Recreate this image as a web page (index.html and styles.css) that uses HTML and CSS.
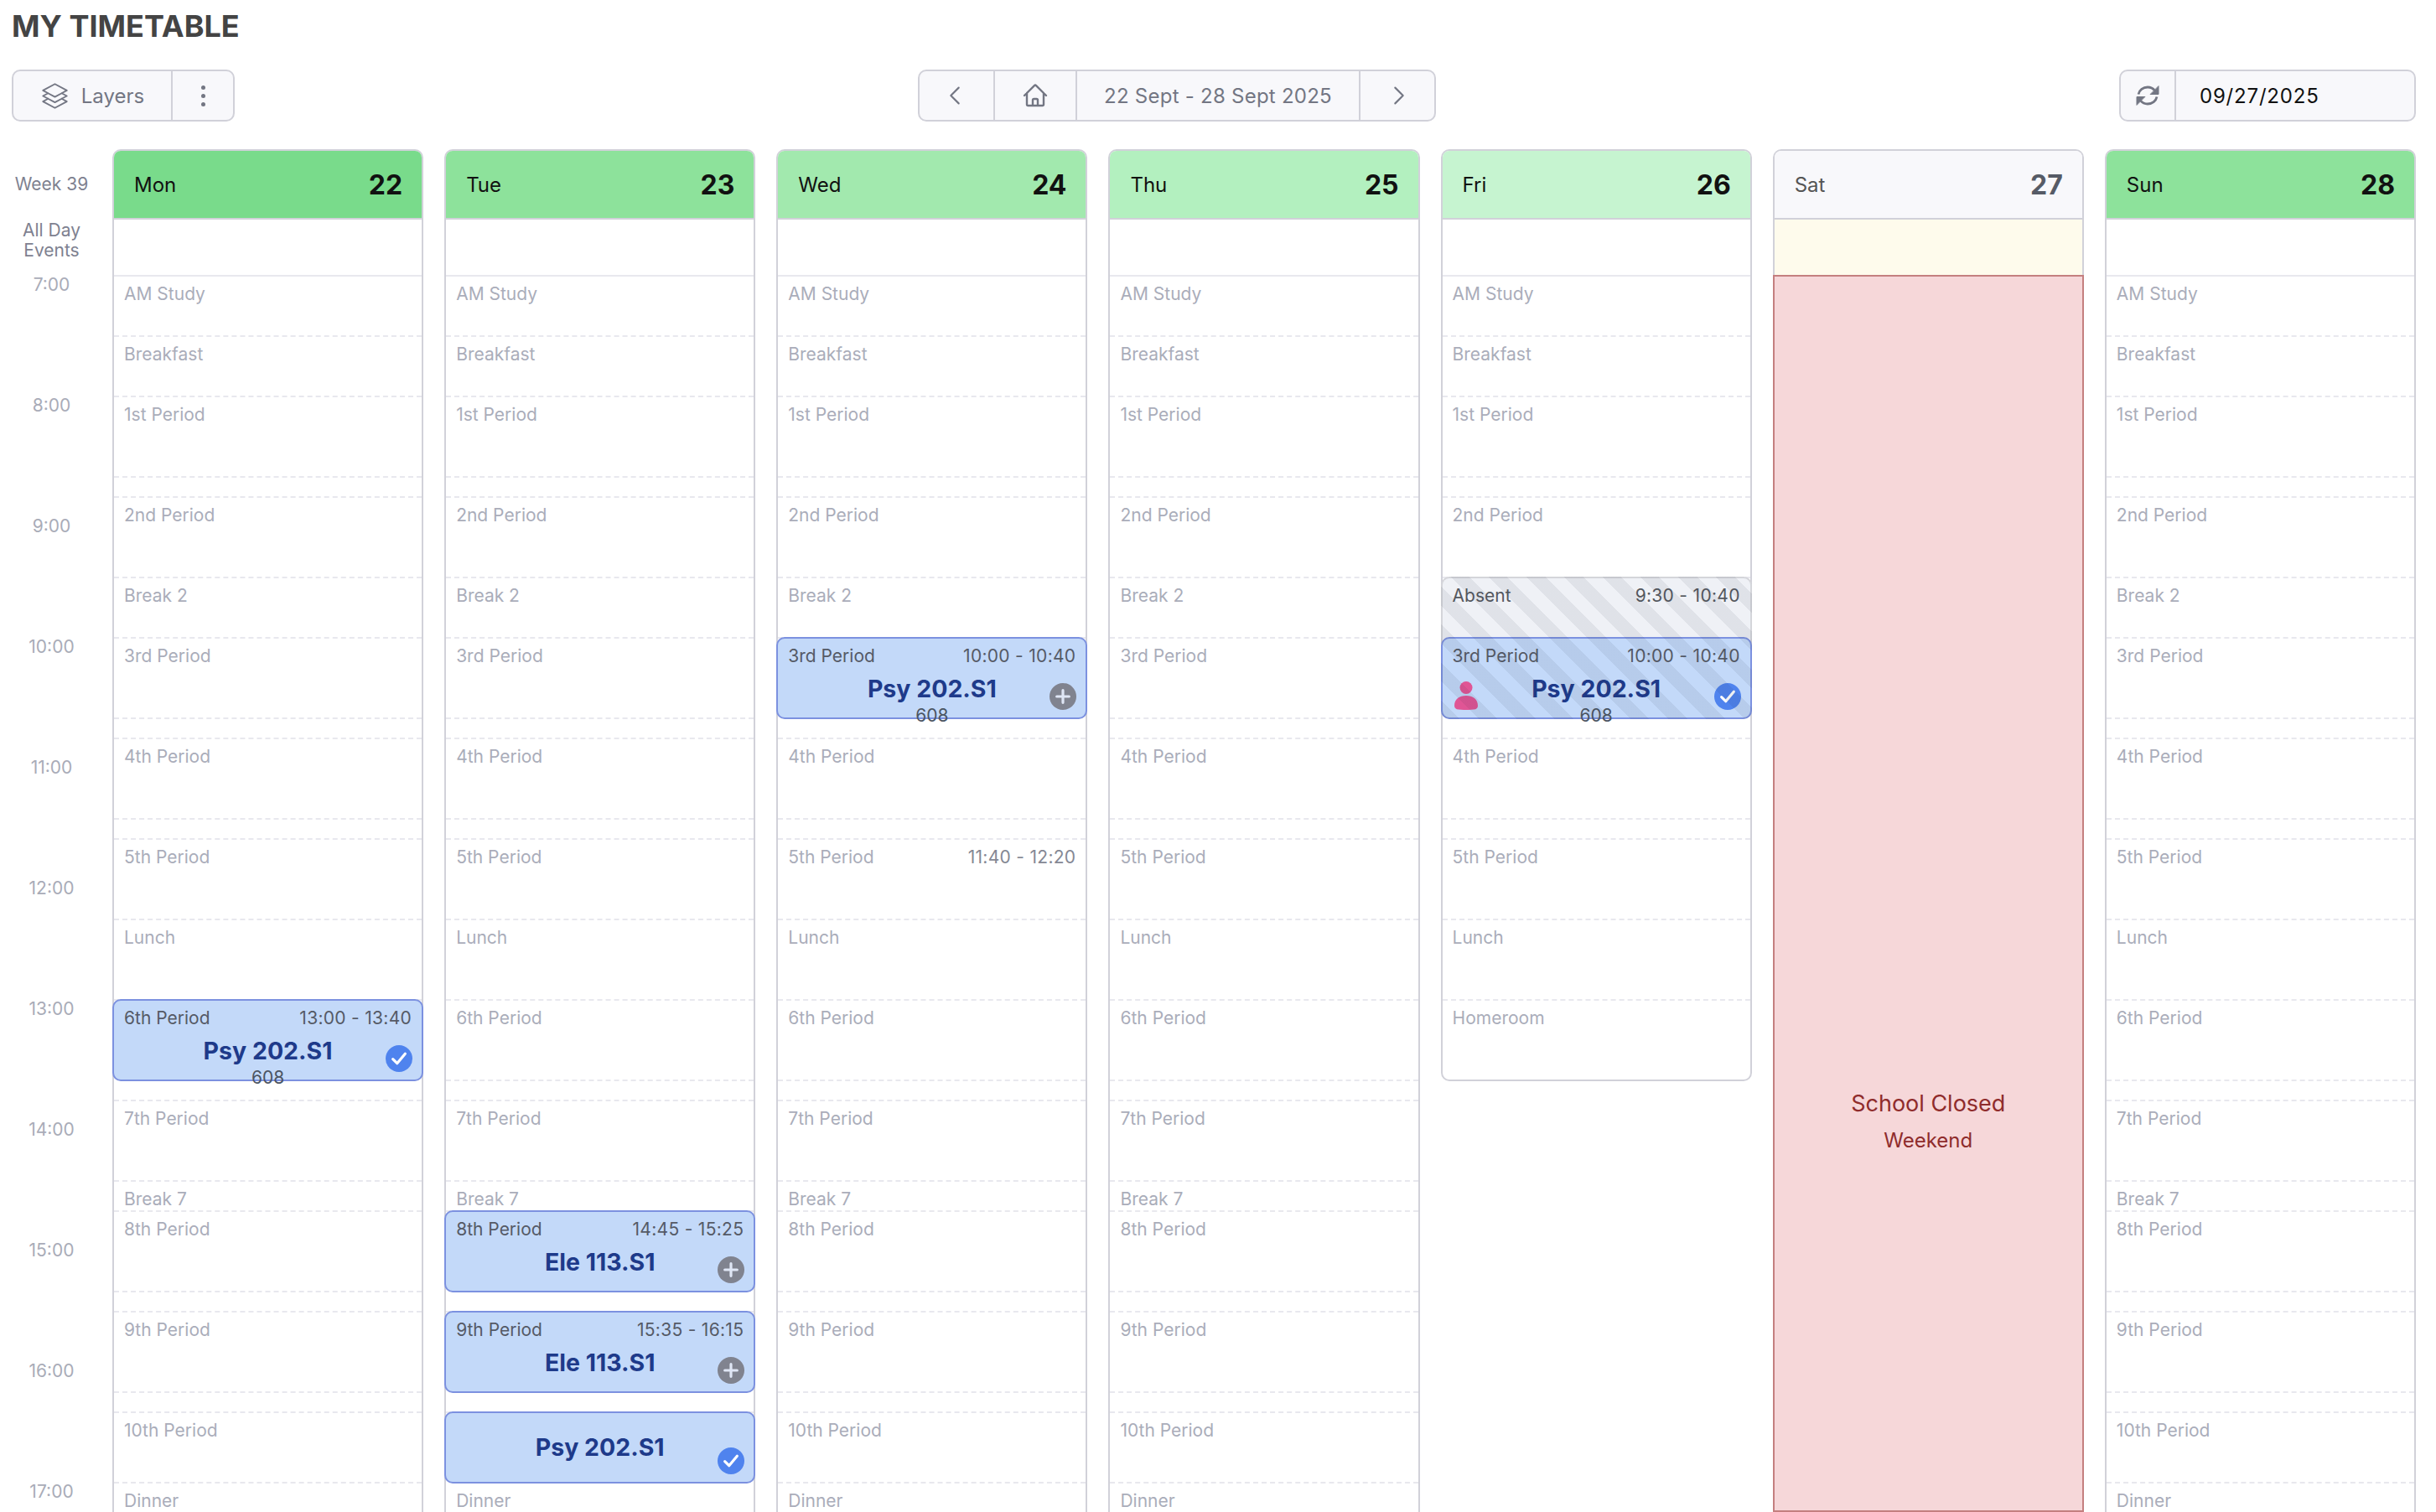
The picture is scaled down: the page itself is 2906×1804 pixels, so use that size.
FILE: index.html
```html
<!DOCTYPE html>
<html lang="en">
<head>
<meta charset="utf-8">
<title>My Timetable</title>
<link rel="stylesheet" href="styles.css">
</head>
<body>
<div class="page">
  <h1 class="title">MY TIMETABLE</h1>
  <div class="toolbar">
    <div class="group">
      <div class="seg seg-layers">
        <svg class="icon-layers" viewBox="0 0 24 24"><path d="M6.429 9.75 2.25 12l4.179 2.25m0-4.5 5.571 3 5.571-3m-11.142 0L2.25 7.5 12 2.25l9.75 5.25-4.179 2.25m0 0L21.75 12l-4.179 2.25m0 0 4.179 2.25L12 21.75 2.25 16.5l4.179-2.25m11.142 0-5.571 3-5.571-3"/></svg>
        <span>Layers</span>
      </div>
      <div class="seg seg-more"><i></i><i></i><i></i></div>
    </div>
    <div class="group">
      <div class="seg seg-prev"><svg class="icon-chev" viewBox="0 0 24 24"><path d="M15.75 19.5 8.25 12l7.5-7.5"/></svg></div>
      <div class="seg seg-home"><svg class="icon-home" viewBox="0 0 24 24"><path d="m2.25 12 8.954-8.955c.44-.439 1.152-.439 1.591 0L21.75 12M4.5 9.75v10.125c0 .621.504 1.125 1.125 1.125H9.75v-4.875c0-.621.504-1.125 1.125-1.125h2.25c.621 0 1.125.504 1.125 1.125V21h4.125c.621 0 1.125-.504 1.125-1.125V9.75M8.25 21h8.25"/></svg></div>
      <div class="seg seg-range">22 Sept - 28 Sept 2025</div>
      <div class="seg seg-next"><svg class="icon-chev" viewBox="0 0 24 24"><path d="m8.25 4.5 7.5 7.5-7.5 7.5"/></svg></div>
    </div>
    <div class="group">
      <div class="seg seg-refresh"><svg class="icon-refresh" viewBox="0 0 28 26"><path class="arc" d="M3 11.500C4 6.500 8.500 3 14 3c3.500 0 6.500 1.500 8.500 4M25 14.500C24 19.500 19.500 23 14 23c-3.500 0-6.500-1.500-8.500-4"/><path class="head" d="M27 2v9.500h-9.500zM1 24v-9.500h9.500z"/></svg></div>
      <div class="seg seg-date">09/27/2025</div>
    </div>
  </div>

  <div class="grid">
    <div class="times">
      <div class="week">Week 39</div>
      <div class="allday-label">All Day<br>Events</div>
      <div class="hour">7:00</div><div class="hour">8:00</div><div class="hour">9:00</div><div class="hour">10:00</div><div class="hour">11:00</div><div class="hour">12:00</div><div class="hour">13:00</div><div class="hour">14:00</div><div class="hour">15:00</div><div class="hour">16:00</div><div class="hour">17:00</div>
    </div>

    <!-- Mon -->
    <div class="day">
      <div class="day-head c-mon"><span>Mon</span><b>22</b></div>
      <div class="allday"></div>
      <div class="slot s30">AM Study</div>
      <div class="slot s30">Breakfast</div>
      <div class="slot s40">1st Period</div>
      <div class="slot s10"></div>
      <div class="slot s40">2nd Period</div>
      <div class="slot s30">Break 2</div>
      <div class="slot s40">3rd Period</div>
      <div class="slot s10"></div>
      <div class="slot s40">4th Period</div>
      <div class="slot s10"></div>
      <div class="slot s40">5th Period</div>
      <div class="slot s40">Lunch</div>
      <div class="event s40">
        <div class="event-row"><span>6th Period</span><span class="range">13:00 - 13:40</span></div>
        <div class="event-title">Psy 202.S1</div>
        <div class="event-room">608</div>
        <span class="badge badge-check"><svg viewBox="0 0 24 24"><path d="m6.500 12.500 3.800 3.800 7.200-8.600"/></svg></span>
      </div>
      <div class="slot s10"></div>
      <div class="slot s40">7th Period</div>
      <div class="slot s15">Break 7</div>
      <div class="slot s40">8th Period</div>
      <div class="slot s10"></div>
      <div class="slot s40">9th Period</div>
      <div class="slot s10"></div>
      <div class="slot s35">10th Period</div>
      <div class="slot s30">Dinner</div>
    </div>

    <!-- Tue -->
    <div class="day">
      <div class="day-head c-tue"><span>Tue</span><b>23</b></div>
      <div class="allday"></div>
      <div class="slot s30">AM Study</div>
      <div class="slot s30">Breakfast</div>
      <div class="slot s40">1st Period</div>
      <div class="slot s10"></div>
      <div class="slot s40">2nd Period</div>
      <div class="slot s30">Break 2</div>
      <div class="slot s40">3rd Period</div>
      <div class="slot s10"></div>
      <div class="slot s40">4th Period</div>
      <div class="slot s10"></div>
      <div class="slot s40">5th Period</div>
      <div class="slot s40">Lunch</div>
      <div class="slot s40">6th Period</div>
      <div class="slot s10"></div>
      <div class="slot s40">7th Period</div>
      <div class="slot s15">Break 7</div>
      <div class="event s40">
        <div class="event-row"><span>8th Period</span><span class="range">14:45 - 15:25</span></div>
        <div class="event-title">Ele 113.S1</div>
        <span class="badge badge-plus"><svg viewBox="0 0 24 24"><path d="M12 6.500v11M6.500 12h11"/></svg></span>
      </div>
      <div class="slot s10"></div>
      <div class="event s40">
        <div class="event-row"><span>9th Period</span><span class="range">15:35 - 16:15</span></div>
        <div class="event-title">Ele 113.S1</div>
        <span class="badge badge-plus"><svg viewBox="0 0 24 24"><path d="M12 6.500v11M6.500 12h11"/></svg></span>
      </div>
      <div class="slot s10"></div>
      <div class="event event-center s35">
        <div class="event-title">Psy 202.S1</div>
        <span class="badge badge-check"><svg viewBox="0 0 24 24"><path d="m6.500 12.500 3.800 3.800 7.200-8.600"/></svg></span>
      </div>
      <div class="slot s30">Dinner</div>
    </div>

    <!-- Wed -->
    <div class="day">
      <div class="day-head c-wed"><span>Wed</span><b>24</b></div>
      <div class="allday"></div>
      <div class="slot s30">AM Study</div>
      <div class="slot s30">Breakfast</div>
      <div class="slot s40">1st Period</div>
      <div class="slot s10"></div>
      <div class="slot s40">2nd Period</div>
      <div class="slot s30">Break 2</div>
      <div class="event s40">
        <div class="event-row"><span>3rd Period</span><span class="range">10:00 - 10:40</span></div>
        <div class="event-title">Psy 202.S1</div>
        <div class="event-room">608</div>
        <span class="badge badge-plus"><svg viewBox="0 0 24 24"><path d="M12 6.500v11M6.500 12h11"/></svg></span>
      </div>
      <div class="slot s10"></div>
      <div class="slot s40">4th Period</div>
      <div class="slot s10"></div>
      <div class="slot s40 slot-split"><span>5th Period</span><span class="range slot-time">11:40 - 12:20</span></div>
      <div class="slot s40">Lunch</div>
      <div class="slot s40">6th Period</div>
      <div class="slot s10"></div>
      <div class="slot s40">7th Period</div>
      <div class="slot s15">Break 7</div>
      <div class="slot s40">8th Period</div>
      <div class="slot s10"></div>
      <div class="slot s40">9th Period</div>
      <div class="slot s10"></div>
      <div class="slot s35">10th Period</div>
      <div class="slot s30">Dinner</div>
    </div>

    <!-- Thu -->
    <div class="day">
      <div class="day-head c-thu"><span>Thu</span><b>25</b></div>
      <div class="allday"></div>
      <div class="slot s30">AM Study</div>
      <div class="slot s30">Breakfast</div>
      <div class="slot s40">1st Period</div>
      <div class="slot s10"></div>
      <div class="slot s40">2nd Period</div>
      <div class="slot s30">Break 2</div>
      <div class="slot s40">3rd Period</div>
      <div class="slot s10"></div>
      <div class="slot s40">4th Period</div>
      <div class="slot s10"></div>
      <div class="slot s40">5th Period</div>
      <div class="slot s40">Lunch</div>
      <div class="slot s40">6th Period</div>
      <div class="slot s10"></div>
      <div class="slot s40">7th Period</div>
      <div class="slot s15">Break 7</div>
      <div class="slot s40">8th Period</div>
      <div class="slot s10"></div>
      <div class="slot s40">9th Period</div>
      <div class="slot s10"></div>
      <div class="slot s35">10th Period</div>
      <div class="slot s30">Dinner</div>
    </div>

    <!-- Fri -->
    <div class="day day-short">
      <div class="day-head c-fri"><span>Fri</span><b>26</b></div>
      <div class="allday"></div>
      <div class="slot s30">AM Study</div>
      <div class="slot s30">Breakfast</div>
      <div class="slot s40">1st Period</div>
      <div class="slot s10"></div>
      <div class="slot s40">2nd Period</div>
      <div class="absent-wrap">
        <div class="absent">
          <div class="event-row"><span>Absent</span><span class="range">9:30 - 10:40</span></div>
        </div>
        <div class="event s40">
          <div class="event-row"><span>3rd Period</span><span class="range">10:00 - 10:40</span></div>
          <div class="event-title">Psy 202.S1</div>
          <div class="event-room">608</div>
          <span class="badge badge-check"><svg viewBox="0 0 24 24"><path d="m6.500 12.500 3.800 3.800 7.200-8.600"/></svg></span>
          <svg class="icon-person" viewBox="0 0 28 34"><circle cx="14" cy="7.500" r="7.500"/><path d="M0 29C0 21 6 17 14 17s14 4 14 12c0 3-2 4.200-5 4.600-6 .6-12 .6-18 0-3-.4-5-1.600-5-4.600z"/></svg>
        </div>
        <div class="stripes"></div>
      </div>
      <div class="slot s10"></div>
      <div class="slot s40">4th Period</div>
      <div class="slot s10"></div>
      <div class="slot s40">5th Period</div>
      <div class="slot s40">Lunch</div>
      <div class="slot slot-last s40">Homeroom</div>
    </div>

    <!-- Sat -->
    <div class="day day-closed">
      <div class="day-head c-sat"><span>Sat</span><b>27</b></div>
      <div class="allday allday-sat"></div>
      <div class="closed">
        <div class="closed-title">School Closed</div>
        <div class="closed-sub">Weekend</div>
      </div>
    </div>

    <!-- Sun -->
    <div class="day">
      <div class="day-head c-tue"><span>Sun</span><b>28</b></div>
      <div class="allday"></div>
      <div class="slot s30">AM Study</div>
      <div class="slot s30">Breakfast</div>
      <div class="slot s40">1st Period</div>
      <div class="slot s10"></div>
      <div class="slot s40">2nd Period</div>
      <div class="slot s30">Break 2</div>
      <div class="slot s40">3rd Period</div>
      <div class="slot s10"></div>
      <div class="slot s40">4th Period</div>
      <div class="slot s10"></div>
      <div class="slot s40">5th Period</div>
      <div class="slot s40">Lunch</div>
      <div class="slot s40">6th Period</div>
      <div class="slot s10"></div>
      <div class="slot s40">7th Period</div>
      <div class="slot s15">Break 7</div>
      <div class="slot s40">8th Period</div>
      <div class="slot s10"></div>
      <div class="slot s40">9th Period</div>
      <div class="slot s10"></div>
      <div class="slot s35">10th Period</div>
      <div class="slot s30">Dinner</div>
    </div>
  </div>
</div>
</body>
</html>
```
FILE: styles.css
```css
* { box-sizing: border-box; }
html, body { margin: 0; padding: 0; height: 100%; overflow: hidden; background: #fff; }
body { font-family: Inter, "Liberation Sans", sans-serif; color: #111; }

.page { height: 1804px; overflow: hidden; padding: 0 24px 0 14px; }

.title { margin: 0 0 21px; height: 62px; padding-top: 1px; line-height: 60px; font-size: 36px; font-weight: 700; color: #444; }

.toolbar { display: flex; justify-content: space-between; height: 62px; margin-bottom: 33px; }
.group { display: flex; height: 62px; background: #f8f8fb; border: 2px solid #d1d1d9; border-radius: 10px; color: #737683; font-size: 24px; }
.seg { display: flex; align-items: center; justify-content: center; border-right: 2px solid #d1d1d9; }
.seg:last-child { border-right: 0; }
.seg-layers { width: 190px; gap: 14px; }
.seg-more { width: 72px; flex-direction: column; gap: 5px; }
.seg-more i { width: 5px; height: 5px; border-radius: 50%; background: #737683; }
.seg-prev { width: 90px; padding-right: 4px; }
.seg-home { width: 98px; }
.seg-range { width: 338px; letter-spacing: .25px; }
.seg-next { width: 88px; padding-left: 4px; }
.seg-refresh { width: 66px; }
.seg-date { width: 284px; justify-content: flex-start; padding-left: 28px; color: #111; letter-spacing: .8px; }

svg { fill: none; stroke: #737683; stroke-linecap: round; stroke-linejoin: round; }
.icon-layers { width: 35px; height: 35px; stroke-width: 1.3; }
.icon-chev { width: 30px; height: 30px; stroke-width: 1.7; }
.icon-home { width: 32px; height: 32px; stroke-width: 1.8; }
.icon-refresh { width: 28px; height: 26px; }
.icon-refresh .arc { stroke-width: 2.8; stroke-linecap: butt; }
.icon-refresh .head { fill: #737683; stroke-width: 1; }

.grid { display: grid; grid-template-columns: 95px repeat(7, 1fr); column-gap: 25px; align-items: start; }

.times { text-align: center; color: #7e8190; font-size: 21px; }
.week { height: 84px; line-height: 84px; white-space: nowrap; }
.allday-label { height: 64px; padding-top: 1px; line-height: 24px; }
.hour { height: 144px; line-height: 28px; color: #a9acb8; }

.day { border: 2px solid #d1d1d9; border-bottom: 0; border-radius: 10px 10px 0 0; }
.day-head { display: flex; align-items: center; justify-content: space-between; height: 82px; padding: 0 23px 0 24px; border-bottom: 2px solid #d1d1d9; border-radius: 8px 8px 0 0; font-size: 24px; color: #111; }
.day-head b { font-size: 32px; font-weight: 700; }
.c-mon { background: #79db8b; }
.c-tue { background: #8de29b; }
.c-wed { background: #a2e9ae; }
.c-thu { background: #b3f0bf; }
.c-fri { background: #c6f4d0; }
.c-sat { background: #f8f8fb; color: #555; }
.c-sat b { color: #565b66; }

.allday { height: 68px; border-bottom: 2px solid #e8e8ee; }
.allday-sat { height: 66px; background: #fefbec; border-bottom: 0; }

.s10 { height: 24px; }
.s15 { height: 36px; }
.s30 { height: 72px; }
.s35 { height: 84px; }
.s40 { height: 96px; }

.slot { padding: 7px 12px 0; border-bottom: 2px dashed #e8e8ee; color: #aaadba; font-size: 21px; line-height: 28px; white-space: nowrap; }
.slot-split { display: flex; justify-content: space-between; }
.slot-time { color: #858894; }
.range { letter-spacing: .3px; }
.slot.slot-last { height: 94px; border-bottom: 0; }

.day-short { border-bottom: 2px solid #d1d1d9; border-radius: 10px; }

.event { position: relative; z-index: 1; margin: -2px -2px 0; padding: 7px 12px 0; background: #c3d9f9; border: 2px solid #7c91e0; border-radius: 10px; color: #555a66; font-size: 21px; line-height: 28px; white-space: nowrap; }
.event.s40 { height: 98px; }
.event.s35 { height: 86px; }
.event-row { display: flex; justify-content: space-between; }
.event-title { margin-top: 7px; text-align: center; color: #1e3a8a; font-size: 28.500px; font-weight: 700; line-height: 36px; }
.event-room { margin-top: 1px; text-align: center; line-height: 26px; color: #4b5563; }
.event-center { display: flex; align-items: center; justify-content: center; padding-top: 0; }
.event-center .event-title { margin: 0; }

.badge { position: absolute; right: 11px; bottom: 9px; display: flex; width: 32px; height: 32px; border-radius: 50%; }
.badge svg { width: 32px; height: 32px; stroke: #fff; stroke-width: 2.4; }
.badge-check { background: #4f83ee; }
.badge-plus { background: #80838f; }
.badge-plus svg { stroke: #dfe6f5; }

.icon-person { position: absolute; left: 14px; bottom: 9px; width: 28px; height: 34px; fill: #e05595; stroke: none; }

.absent-wrap { position: relative; }
.absent { margin: -2px -2px 0; padding: 7px 12px 0; height: 74px; background: #eff1f6; border: 2px solid #d4d5da; border-bottom: 0; border-radius: 10px 10px 0 0; color: #55585f; font-size: 21px; line-height: 28px; white-space: nowrap; }
.stripes { position: absolute; z-index: 2; left: -2px; right: -2px; top: 0; bottom: 0; pointer-events: none; border-radius: 10px; background: repeating-linear-gradient(45deg, rgba(30, 40, 60, .075) 0 16px, transparent 16px 32px); }

.closed { display: flex; flex-direction: column; align-items: center; height: 1476px; margin: 0 -2px; padding-top: 969px; background: #f6d7d9; border: 2px solid #c47f7f; color: #8f2c2c; }
.closed-title { font-size: 27px; line-height: 36px; }
.closed-sub { margin-top: 10px; font-size: 24px; line-height: 32px; }
```
